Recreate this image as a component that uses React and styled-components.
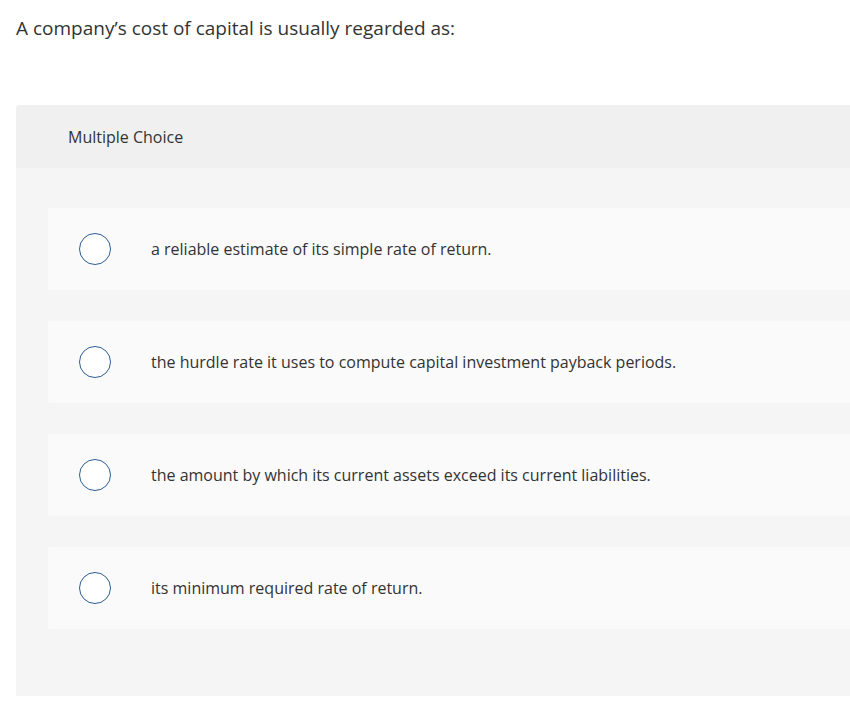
import React from "react";
import styled, { createGlobalStyle } from "styled-components";

const GlobalStyle = createGlobalStyle`
  body {
    margin: 0;
    background: #fff;
    font-family: "Open Sans", "Liberation Sans", sans-serif;
    color: #333;
  }
`;

const Page = styled.div`
  padding: 15px 0 0 16px;
`;

const Question = styled.p`
  margin: 0 0 64px 0;
  font-size: 19px;
  line-height: 26px;
  color: #333;
`;

const Panel = styled.div`
  background: #f5f5f5;
  border-radius: 4px 0 0 0;
  padding-bottom: 67px;
`;

const PanelHeader = styled.div`
  height: 63px;
  display: flex;
  align-items: center;
  padding-left: 52px;
  background: #f0f0f0;
  border-radius: 4px 0 0 0;
  font-size: 16px;
  color: #333;
`;

const OptionList = styled.div`
  display: flex;
  flex-direction: column;
  gap: 31px;
  padding: 40px 0 0 32px;
`;

const Option = styled.label`
  height: 82px;
  display: flex;
  align-items: center;
  background: #fafafa;
  border-radius: 3px 0 0 3px;
  cursor: pointer;
`;

const Radio = styled.span`
  width: 30px;
  height: 30px;
  margin-left: 31px;
  border-radius: 50%;
  border: 1.5px solid #2e5d92;
  background: #fff;
  flex-shrink: 0;
`;

const OptionText = styled.span`
  margin-left: 40px;
  font-size: 16px;
  color: #333;
`;

const options = [
  "a reliable estimate of its simple rate of return.",
  "the hurdle rate it uses to compute capital investment payback periods.",
  "the amount by which its current assets exceed its current liabilities.",
  "its minimum required rate of return.",
];

export default function App() {
  return (
    <>
      <GlobalStyle />
      <Page>
        <Question>A company’s cost of capital is usually regarded as:</Question>
        <Panel>
          <PanelHeader>Multiple Choice</PanelHeader>
          <OptionList>
            {options.map((text) => (
              <Option key={text}>
                <Radio />
                <OptionText>{text}</OptionText>
              </Option>
            ))}
          </OptionList>
        </Panel>
      </Page>
    </>
  );
}
